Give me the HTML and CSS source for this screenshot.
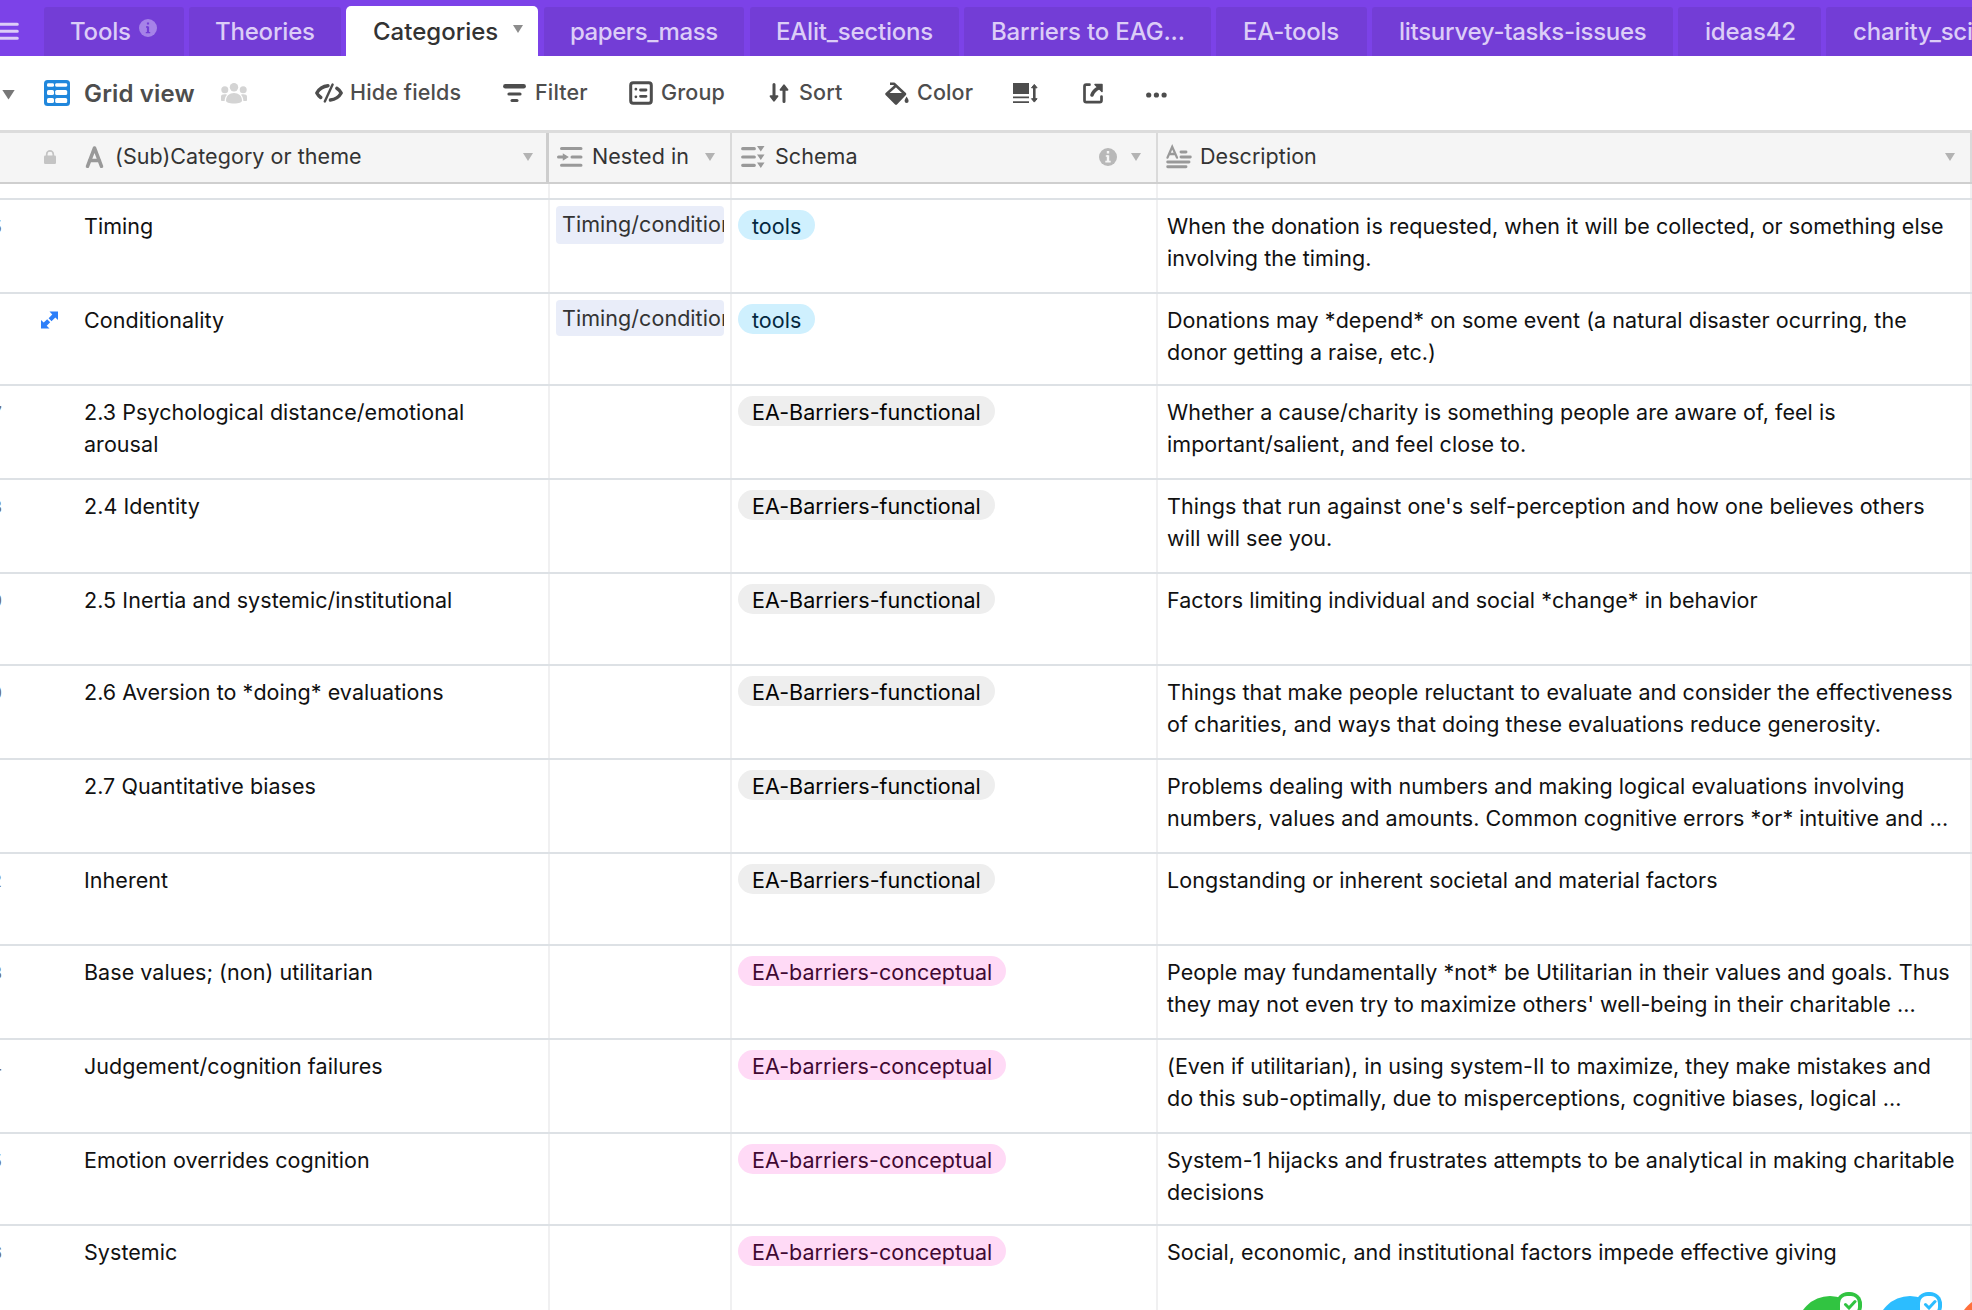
FILE: index.html
```html
<!DOCTYPE html>
<html lang="en">
<head>
<meta charset="utf-8">
<title>Categories</title>
<link rel="stylesheet" href="styles.css">
</head>
<body>
<nav class="tabs">
  <svg class="menu" width="19" height="18" viewBox="0 0 19 18"><path d="M-4 2.300H17.300M-4 9.300H17.300M-4 16.300H17.300" stroke="#dccdf7" stroke-width="3" stroke-linecap="round"/></svg>
  <div class="tab w-tools"><span>Tools</span><svg class="tab-info" width="18" height="18" viewBox="0 0 18 18"><circle cx="9" cy="9" r="9" fill="#a683e8"/><path d="M9 3.600v2M9 7.400v6" stroke="#733dd6" stroke-width="2.200"/><path d="M7 8H9M6.800 13.600h4.400" stroke="#733dd6" stroke-width="1.400"/></svg></div>
  <div class="tab w-theories"><span>Theories</span></div>
  <div class="tab active w-categories"><span>Categories</span><i class="caret tab-caret"></i></div>
  <div class="tab w-papers"><span>papers_mass</span></div>
  <div class="tab w-ealit"><span>EAlit_sections</span></div>
  <div class="tab w-barriers"><span>Barriers to EAG...</span></div>
  <div class="tab w-eatools"><span>EA-tools</span></div>
  <div class="tab w-lit"><span>litsurvey-tasks-issues</span></div>
  <div class="tab w-ideas"><span>ideas42</span></div>
  <div class="tab w-charity"><span>charity_science</span></div>
</nav>
<div class="toolbar">
  <i class="caret view-caret"></i>
  <div class="view">
    <svg width="26" height="26" viewBox="0 0 26 26"><rect width="26" height="26" rx="3.5" fill="#2087dc"/><g fill="#fff"><rect x="3" y="3.200" width="7" height="3.600" rx="1.400"/><rect x="11.200" y="3.200" width="12" height="3.600" rx="1.400"/><rect x="3" y="10" width="7" height="5" rx="1.600"/><rect x="11.200" y="10" width="12" height="5" rx="1.600"/><rect x="3" y="18" width="7" height="5" rx="1.600"/><rect x="11.200" y="18" width="12" height="5" rx="1.600"/></g></svg>
    <span class="view-name">Grid view</span>
    <svg class="people" width="26" height="21" viewBox="0 0 26 21" fill="#d4d4d4"><circle cx="13" cy="4.200" r="4.200"/><circle cx="3.800" cy="6.800" r="3.500"/><circle cx="22.200" cy="6.800" r="3.500"/><path d="M5 17.600C5 12.800 8.500 10 13 10S21 12.800 21 17.600C21 19.600 18 20.600 13 20.600S5 19.600 5 17.600Z"/><path d="M0 17.500v-4c0-1.800 1.800-2.500 4.500-2.300 1 .1 1.500.5 1.300.8C4.300 13.500 3.700 15.500 3.600 18 1.500 18 0 18 0 17.500Z"/><path d="M26 17.500v-4c0-1.800-1.800-2.500-4.500-2.300-1 .1-1.500.5-1.300.8 1.500 1.500 2.100 3.500 2.200 6 2.100 0 3.600 0 3.600-.5Z"/></svg>
  </div>
  <div class="tool t-hide"><svg width="28" height="20" viewBox="0 0 28 20" fill="none" stroke="#4d4d4d" stroke-width="3.400" stroke-linecap="round" stroke-linejoin="round"><path d="M13 2.700C8 3.200 3.800 6.400 1.800 10c1 1.900 2.300 3.300 4 4.500M21.800 5.300c1.900 1.200 3.400 2.800 4.400 4.700-2 3.600-6 6.500-10.800 7"/><path d="M9.800 18.500L17.600 1.500" stroke-width="2.400"/></svg><span>Hide fields</span></div>
  <div class="tool t-filter"><svg width="23" height="20" viewBox="0 0 23 20" stroke="#4d4d4d" stroke-linecap="round"><path d="M2.300 3.300H20.700" stroke-width="4.400"/><path d="M6 11H17" stroke-width="3.200"/><path d="M9 17.500H14" stroke-width="3"/></svg><span>Filter</span></div>
  <div class="tool t-group"><svg width="24" height="24" viewBox="0 0 24 24"><rect x="1.700" y="1.700" width="20.600" height="20.600" rx="2.500" fill="none" stroke="#4d4d4d" stroke-width="3"/><g stroke="#4d4d4d" stroke-width="2.800" stroke-linecap="round"><path d="M11.500 9H17M11.500 15.300H17M6.900 8.200v0M6.900 15.800v0"/></g></svg><span>Group</span></div>
  <div class="tool t-sort"><svg width="20" height="20" viewBox="0 0 20 20" fill="none" stroke="#4d4d4d" stroke-width="3" stroke-linecap="round" stroke-linejoin="round"><path d="M5 1.500V16M15 18.500V4"/><path d="M1.500 13.200H8.500L5 17.800ZM11.500 6.800H18.500L15 2.200Z" fill="#4d4d4d" stroke-width="1.800"/></svg><span>Sort</span></div>
  <div class="tool t-color"><svg width="24" height="23" viewBox="0 0 24 23"><path d="M5 1.700H9L20 12 11 21.500 1.500 12 11 3.500" fill="none" stroke="#4d4d4d" stroke-width="2.600" stroke-linejoin="round"/><path d="M.8 11H21L11.500 22H10.500Z" fill="#4d4d4d"/><path d="M21.600 14.500c1.300 2 2 3.300 2 4.400a2 2 0 0 1-4 0c0-1.100.7-2.400 2-4.400Z" fill="#4d4d4d"/></svg><span>Color</span></div>
  <div class="tool t-height"><svg width="25" height="21" viewBox="0 0 25 21"><path d="M0 0H16V11H0ZM0 13.500H16V15.200H0ZM0 18.300H16V20H0Z" fill="#4d4d4d"/><path d="M21.300 3V17.500" fill="none" stroke="#4d4d4d" stroke-width="2.600"/><path d="M18.500 4.800L21.300 1.400 24.100 4.800ZM18.500 15.700L21.300 19.100 24.100 15.700Z" fill="#4d4d4d" stroke="#4d4d4d" stroke-linejoin="round"/></svg></div>
  <div class="tool t-share"><svg width="21" height="21" viewBox="0 0 21 21" fill="none" stroke="#4d4d4d" stroke-width="2.700" stroke-linecap="round" stroke-linejoin="round"><path d="M6.500 1.700H3.200Q1.500 1.700 1.500 3.400V17.500Q1.500 19.200 3.200 19.200H16.800Q18.500 19.200 18.500 17.500V13.500"/><path d="M9 12C9.800 9.500 12 6.800 15.500 5" stroke-width="3.600"/><path d="M12 1.500H19V8.500Z" fill="#4d4d4d" stroke-width="1.500"/></svg></div>
  <div class="tool t-more"><svg width="21" height="6" viewBox="0 0 21 6" fill="#4d4d4d"><circle cx="2.700" cy="3" r="2.600"/><circle cx="10.400" cy="3" r="2.600"/><circle cx="18.100" cy="3" r="2.600"/></svg></div>
</div>
<div class="head">
  <div class="hcell h-first">
    <svg class="lock" width="12" height="14" viewBox="0 0 12 14"><rect y="5.500" width="12" height="8.500" rx="1.200" fill="#c4c4c4"/><path d="M2.700 6V4.200a3.300 3.300 0 0 1 6.600 0V6" fill="none" stroke="#c4c4c4" stroke-width="1.700"/></svg>
    <svg class="i-text" width="19" height="24" viewBox="0 0 19 24"><path d="M2.500 21.300L9.500 3 16.500 21.300M4.500 15.500H14.500" fill="none" stroke="#999" stroke-width="3.500" stroke-linecap="round" stroke-linejoin="round"/></svg>
    <span>(Sub)Category or theme</span><i class="caret"></i></div>
  <div class="hcell h-nested"><svg width="26" height="22" viewBox="0 0 26 22" stroke="#999" stroke-width="3" stroke-linecap="round"><path d="M4.500 2.500H24M15 11H24M4.500 19.300H24M1.500 11H7"/><path d="M6.500 8.500L10.500 11 6.500 13.500Z" fill="#999" stroke-width="1.400"/></svg><span>Nested in</span><i class="caret"></i></div>
  <div class="hcell h-schema"><svg width="24" height="22" viewBox="0 0 24 22"><path d="M1.700 2.700H13.300M1.700 11H13.300M1.700 19.300H13.300" stroke="#999" stroke-width="3.200" stroke-linecap="round"/><path d="M16 0H23.500L19.800 5.500ZM16 8.500H23.500L19.800 14ZM16 16.500H23.500L19.800 22Z" fill="#999"/></svg><span>Schema</span><svg class="hinfo" width="18" height="18" viewBox="0 0 18 18"><circle cx="9" cy="9" r="9" fill="#b8b8b8"/><path d="M9 3v2.500M9 7.200v6.500" stroke="#f5f5f5" stroke-width="2.400"/><path d="M6.800 8H9M6.300 13.700h5.400" stroke="#f5f5f5" stroke-width="1.700"/></svg><i class="caret"></i></div>
  <div class="hcell h-desc"><svg width="26" height="24" viewBox="0 0 26 24" fill="none" stroke="#999" stroke-linecap="round"><path d="M1.500 12.600L6.200 1.800 11 12.600M3.300 9H9.200" stroke-width="2.300"/><path d="M15 7H20M15 12H24.300M1.700 17H23M1.700 21.800H20" stroke-width="2.900"/></svg><span>Description</span><i class="caret"></i></div>
</div>
<main class="grid">
  <div class="row stub"><div class="cell c1"></div><div class="cell c2"></div><div class="cell c3"></div><div class="cell c4"></div></div>
  <div class="row"><div class="cell c1"><b class="num">15</b><p>Timing</p></div><div class="cell c2"><div class="link">Timing/condition</div></div><div class="cell c3"><span class="pill blue">tools</span></div><div class="cell c4"><p>When the donation is requested, when it will be collected, or something else<br>involving the timing.</p></div></div>
  <div class="row short"><div class="cell c1"><svg class="expand" width="17" height="18" viewBox="0 0 17 18" fill="#2d7ff9"><path d="M8.500 .5H17V9L14.300 6.500 10.500 10.300 7.600 7.300 11.300 3.500ZM0 17.500V9L2.700 11.500 6.200 8.200 9.200 11.300 5.700 14.800 8.500 17.500Z"/><path d="M6.200 7.200L10.600 11.600" stroke="#fff" stroke-width="1"/></svg><p>Conditionality</p></div><div class="cell c2"><div class="link">Timing/condition</div></div><div class="cell c3"><span class="pill blue">tools</span></div><div class="cell c4"><p>Donations may *depend* on some event (a natural disaster ocurring, the<br>donor getting a raise, etc.)</p></div></div>
  <div class="row"><div class="cell c1"><b class="num">17</b><p>2.3 Psychological distance/emotional<br>arousal</p></div><div class="cell c2"></div><div class="cell c3"><span class="pill gray">EA-Barriers-functional</span></div><div class="cell c4"><p>Whether a cause/charity is something people are aware of, feel is<br>important/salient, and feel close to.</p></div></div>
  <div class="row"><div class="cell c1"><b class="num">18</b><p>2.4 Identity</p></div><div class="cell c2"></div><div class="cell c3"><span class="pill gray">EA-Barriers-functional</span></div><div class="cell c4"><p>Things that run against one's self-perception and how one believes others<br>will will see you.</p></div></div>
  <div class="row short"><div class="cell c1"><b class="num">19</b><p>2.5 Inertia and systemic/institutional</p></div><div class="cell c2"></div><div class="cell c3"><span class="pill gray">EA-Barriers-functional</span></div><div class="cell c4"><p>Factors limiting individual and social *change* in behavior</p></div></div>
  <div class="row"><div class="cell c1"><b class="num">20</b><p>2.6 Aversion to *doing* evaluations</p></div><div class="cell c2"></div><div class="cell c3"><span class="pill gray">EA-Barriers-functional</span></div><div class="cell c4"><p>Things that make people reluctant to evaluate and consider the effectiveness<br>of charities, and ways that doing these evaluations reduce generosity.</p></div></div>
  <div class="row"><div class="cell c1"><b class="num one">21</b><p>2.7 Quantitative biases</p></div><div class="cell c2"></div><div class="cell c3"><span class="pill gray">EA-Barriers-functional</span></div><div class="cell c4"><p>Problems dealing with numbers and making logical evaluations involving<br>numbers, values and amounts. Common cognitive errors *or* intuitive and ...</p></div></div>
  <div class="row short"><div class="cell c1"><b class="num">22</b><p>Inherent</p></div><div class="cell c2"></div><div class="cell c3"><span class="pill gray">EA-Barriers-functional</span></div><div class="cell c4"><p>Longstanding or inherent societal and material factors</p></div></div>
  <div class="row"><div class="cell c1"><b class="num">23</b><p>Base values; (non) utilitarian</p></div><div class="cell c2"></div><div class="cell c3"><span class="pill pink">EA-barriers-conceptual</span></div><div class="cell c4"><p>People may fundamentally *not* be Utilitarian in their values and goals. Thus<br>they may not even try to maximize others' well-being in their charitable ...</p></div></div>
  <div class="row"><div class="cell c1"><b class="num">24</b><p>Judgement/cognition failures</p></div><div class="cell c2"></div><div class="cell c3"><span class="pill pink">EA-barriers-conceptual</span></div><div class="cell c4"><p>(Even if utilitarian), in using system-II to maximize, they make mistakes and<br>do this sub-optimally, due to misperceptions, cognitive biases, logical ...</p></div></div>
  <div class="row short"><div class="cell c1"><b class="num">25</b><p>Emotion overrides cognition</p></div><div class="cell c2"></div><div class="cell c3"><span class="pill pink">EA-barriers-conceptual</span></div><div class="cell c4"><p>System-1 hijacks and frustrates attempts to be analytical in making charitable<br>decisions</p></div></div>
  <div class="row"><div class="cell c1"><b class="num">26</b><p>Systemic</p></div><div class="cell c2"></div><div class="cell c3"><span class="pill pink">EA-barriers-conceptual</span></div><div class="cell c4"><p>Social, economic, and institutional factors impede effective giving</p></div></div>
</main>
<svg class="apps" width="178" height="20" viewBox="0 0 178 20">
  <g><circle cx="36" cy="39" r="33" fill="#31c441"/><rect x="42" y="2" width="26" height="26" rx="12" fill="#31c441"/><rect x="46" y="6" width="18" height="18" rx="7" fill="#fff"/><path d="M46 14H53V20H46Z" fill="#fff"/><path d="M51.500 14.500L55 18 61 11.500" fill="none" stroke="#31c441" stroke-width="3" stroke-linecap="round"/></g>
  <g transform="translate(80 0)"><circle cx="36" cy="39" r="33" fill="#2cbdff"/><rect x="42" y="2" width="26" height="26" rx="12" fill="#2cbdff"/><rect x="46" y="6" width="18" height="18" rx="7" fill="#fff"/><path d="M46 14H53V20H46Z" fill="#fff"/><path d="M51.500 14.500L55 18 61 11.500" fill="none" stroke="#2cbdff" stroke-width="3" stroke-linecap="round"/></g>
  <circle cx="197" cy="39" r="33" fill="#ff6f3c"/>
</svg>
</body>
</html>
```

FILE: styles.css
```css
* { box-sizing: border-box; }
html, body { margin: 0; width: 1972px; height: 1310px; overflow: hidden; }
body {
  position: relative;
  background: #fff;
  color: #111;
  font: 400 21.5px/32px Inter, "Liberation Sans", sans-serif;
  letter-spacing: 0.05px;
}
svg { display: block; flex: none; overflow: visible; }
p { margin: 0; white-space: nowrap; }
.caret {
  display: block;
  width: 10px;
  height: 8px;
  background: #b3b3b3;
  clip-path: polygon(0 0, 100% 0, 50% 100%);
}

/* table tabs */
.tabs {
  display: flex;
  align-items: flex-end;
  height: 56px;
  overflow: hidden;
  background: #7c42e8;
}
.menu { align-self: flex-start; margin: 22px 25px 0 0; overflow: hidden; }
.tab {
  display: flex;
  flex: none;
  height: 49px;
  margin-right: 5px;
  padding: 9px 0 0 26px;
  border-radius: 3px 3px 0 0;
  background: #733dd6;
  color: #dccdf7;
  font-size: 24px;
  font-weight: 500;
  letter-spacing: -0.2px;
  white-space: nowrap;
}
.tab.active { height: 50px; padding: 10px 15px 0 27px; background: #fff; color: #333; border-radius: 5px 5px 0 0; letter-spacing: 0; }
.tab-info { margin: 3px 0 0 8px; }
.tab-caret { margin: 9px 0 0 auto; background: #8c8c8c; }
.w-tools { width: 140px; }
.w-theories { width: 152px; }
.w-categories { width: 192px; margin-right: 6px; }
.w-papers { width: 200px; margin-right: 6px; letter-spacing: -0.45px; }
.w-ealit { width: 209px; }
.w-barriers { width: 247px; padding-left: 27px; letter-spacing: -0.15px; }
.w-eatools { width: 151px; padding-left: 27px; }
.w-lit { width: 301px; padding-left: 27px; letter-spacing: -0.28px; }
.w-ideas { width: 143px; padding-left: 27px; }
.w-charity { width: 200px; padding-left: 27px; }

/* view toolbar */
.toolbar {
  display: flex;
  align-items: center;
  height: 74px;
  padding: 0 0 0 2px;
  color: #4d4d4d;
  font-weight: 500;
  letter-spacing: 0.15px;
}
.view-caret { width: 13px; height: 10px; margin: 3px 29px 0 0; background: #777; }
.view { display: flex; align-items: center; width: 271px; }
.view-name { width: 151px; padding: 1px 0 0 14px; font-size: 24px; font-weight: 600; white-space: nowrap; }
.tool { display: flex; align-items: center; gap: 7px; white-space: nowrap; }
.tool span { padding-bottom: 2px; }
.t-hide { width: 188px; }
.t-filter { width: 126px; gap: 9px; }
.t-group { width: 140px; gap: 8px; }
.t-sort { width: 116px; gap: 10px; }
.t-color { width: 128px; gap: 8px; }
.t-height { width: 70px; }
.t-share { width: 63px; }
.t-more { padding-top: 3px; }

/* column headings */
.head {
  display: flex;
  height: 54px;
  border-top: 3px solid #dcdcdc;
  border-bottom: 2px solid #cfcfcf;
  background: #f5f5f5;
  color: #333;
}
.hcell { display: flex; align-items: center; height: 49px; border-right: 2px solid #dadada; padding: 0 15px 1px 0; white-space: nowrap; }
.hcell span { padding-bottom: 2px; }
.hcell .caret { margin-left: auto; }
.h-first { width: 549px; padding-left: 44px; padding-right: 13px; border-right: 3px solid #cdcdcd; }
.h-first .lock { margin-right: 29px; }
.h-first span { margin-left: 11px; }
.h-nested { width: 183px; padding-left: 8px; }
.h-nested span { margin-left: 9px; }
.h-schema { width: 426px; padding-left: 9px; }
.h-schema span { margin-left: 10px; }
.h-schema .hinfo { margin: 0 14px 0 auto; }
.h-schema .caret { margin-left: 0; }
.h-desc { width: 814px; padding-left: 8px; }
.h-desc span { margin-left: 8px; }

/* records */
.row { display: flex; height: 94px; border-bottom: 2px solid #dde1e5; }
.row:last-child { border-bottom: 0; }
.row.short { height: 92px; }
.row.stub { height: 16px; }
.cell { flex: none; padding-top: 10px; border-right: 2px solid #f0f0f1; }
.c1 { display: flex; width: 550px; }
.c1 p { margin-left: auto; width: 464px; }
.num {
  display: flex;
  justify-content: flex-end;
  width: 2px;
  padding-top: 1px;
  color: #6b6b6b;
  font-size: 17px;
  font-weight: 400;
}
.num.one { width: 0; }
.expand { margin: 7px 0 0 41px; }
.c2 { width: 182px; padding: 6px 6px 0; }
.link {
  height: 38px;
  padding: 2px 0 0 6px;
  overflow: hidden;
  border-radius: 4px;
  background: #e9edf9;
  color: #333;
  white-space: nowrap;
}
.short .link { height: 36px; }
.c3 { width: 426px; padding-left: 6px; }
.pill {
  display: block;
  width: fit-content;
  height: 30px;
  padding: 0 14px;
  border-radius: 15px;
  white-space: nowrap;
}
.blue { background: #cff0fe; color: #04283f; }
.gray { background: #eee; color: #040404; }
.pink { background: #ffdaf6; color: #400832; }
.c4 { width: 814px; padding-left: 9px; }

/* app badges peeking over the bottom edge */
.apps { position: absolute; left: 1794px; bottom: 0; overflow: hidden; }
```
